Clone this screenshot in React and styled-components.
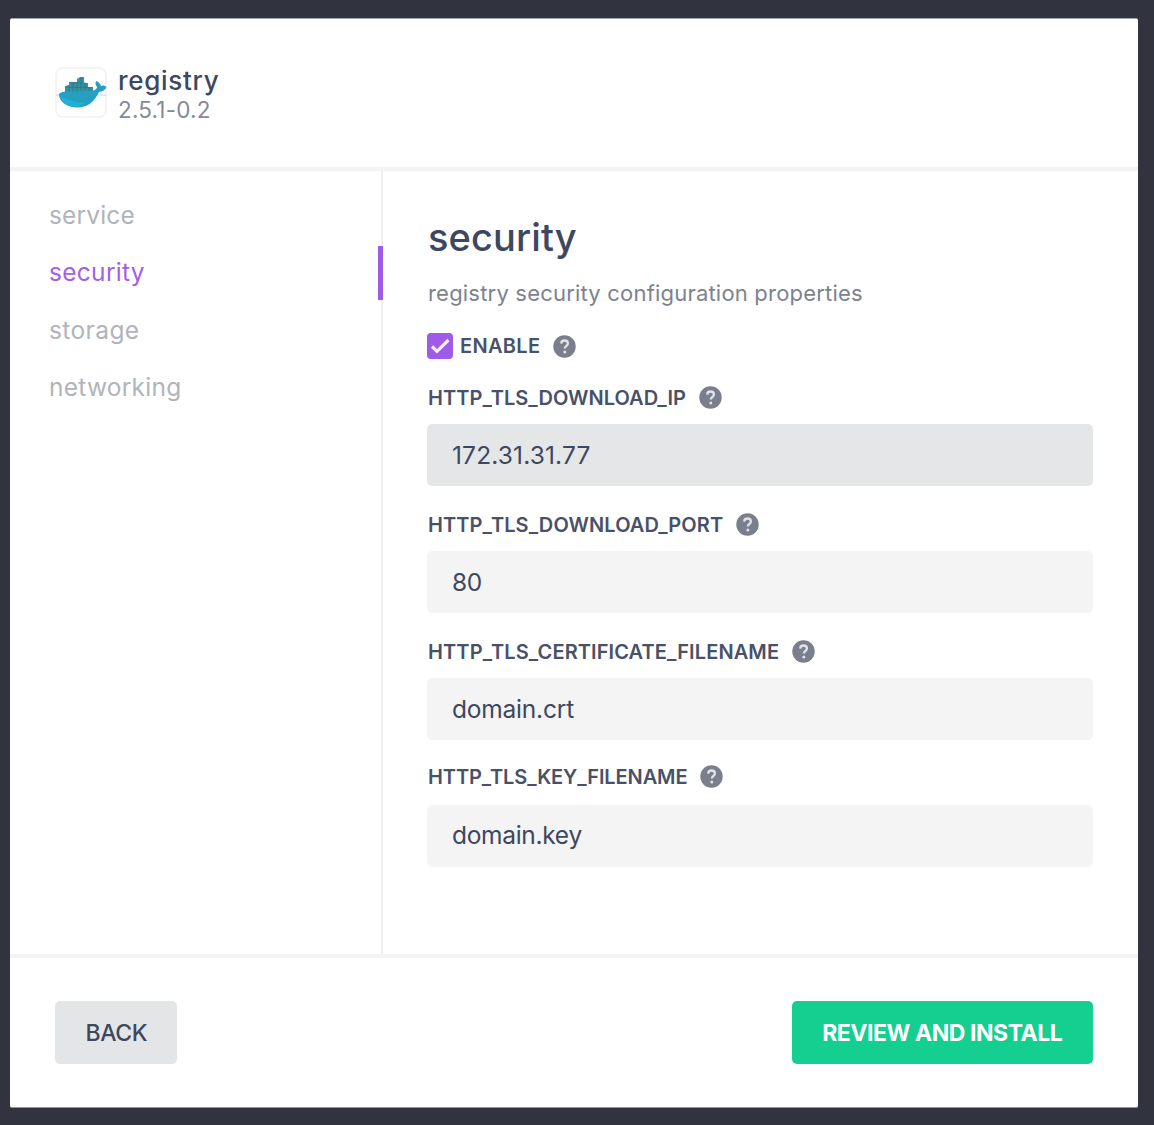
import React, { useState } from "react";
import styled, { createGlobalStyle } from "styled-components";

const ink = "#3d475f";

const GlobalStyle = createGlobalStyle`
  *, *::before, *::after { box-sizing: border-box; }
  body {
    margin: 0;
    background: #31343e;
    color: ${ink};
    font-family: Inter, "Liberation Sans", sans-serif;
  }
  button, input { font-family: inherit; }
`;

const Page = styled.main`
  height: 1125px;
  padding: 18px 16px 17px 10px;
  background: #31343e;
`;

const Dialog = styled.section`
  display: flex;
  flex-direction: column;
  height: 1090px;
  background: #fff;
  border-top: 1px solid #a5a6aa;
  border-bottom: 1px solid #8f9395;
  border-radius: 2px;
`;

const Header = styled.header`
  display: flex;
  align-items: flex-start;
  height: 152px;
  padding: 48px 44px 0;
  border-bottom: 4px solid #f3f3f3;
`;

const LogoTile = styled.div`
  width: 52px;
  height: 51px;
  margin-left: 0.5px;
  border: 2px solid #f4f4f4;
  border-radius: 8px;
  svg { display: block; }
`;

const Identity = styled.div`
  display: flex;
  flex-direction: column;
  margin-left: 11.5px;
`;

const AppName = styled.h1`
  margin: -2px 0 0;
  font-size: 26px;
  font-weight: 500;
  line-height: 32px;
  letter-spacing: 0.7px;
`;

const Version = styled.span`
  font-size: 22.5px;
  line-height: 26px;
  letter-spacing: 0.2px;
  color: #858a97;
`;

const Body = styled.div`
  display: flex;
  flex: 1;
`;

const Nav = styled.nav`
  display: flex;
  flex-direction: column;
  gap: 4px;
  width: 373px;
  padding-top: 18px;
  border-right: 2px solid #efeff0;
`;

const NavItem = styled.a`
  display: flex;
  align-items: center;
  height: 53.3px;
  margin-right: -2px;
  padding: 0 0 1px 39px;
  border-right: 5px solid ${(p) => (p.$active ? "#9e5be8" : "transparent")};
  color: ${(p) => (p.$active ? "#a35eea" : "#b0b4bc")};
  font-size: 24.5px;
  letter-spacing: ${(p) => p.$track}px;
`;

const Content = styled.div`
  flex: 1;
  padding: 41px 45px 0 44px;
`;

const Title = styled.h2`
  margin: 0 0 0 1px;
  font-size: 38px;
  font-weight: 500;
  line-height: 50px;
  letter-spacing: 0.1px;
`;

const Description = styled.p`
  margin: 17px 0 0 1px;
  font-size: 22px;
  line-height: 28px;
  letter-spacing: 0.2px;
  color: #7c8290;
`;

const EnableRow = styled.div`
  display: flex;
  align-items: center;
  height: 26px;
  margin-top: 26px;
`;

const CheckBox = styled.button`
  width: 26px;
  height: 26px;
  margin-right: 7px;
  padding: 0;
  border: 0;
  border-radius: 4px;
  background: ${(p) => (p.$checked ? "#9f5ae8" : "#e5e6e8")};
  svg { display: block; }
`;

const Label = styled.label`
  margin-right: 13px;
  font-size: 20px;
  font-weight: 600;
  line-height: 24px;
  letter-spacing: ${(p) => p.$track}px;
  color: #485168;
`;

const Fields = styled.div`
  display: flex;
  flex-direction: column;
  gap: 27px;
  padding-top: 27px;
`;

const Field = styled.div`
  &:last-child {
    margin-top: -2px;
    input { margin-top: 15.5px; }
  }
`;

const LabelRow = styled.div`
  display: flex;
  align-items: center;
  height: 24px;
  padding-left: 1px;
  svg { flex: none; margin-bottom: 1px; }
`;

const Input = styled.input`
  display: block;
  width: 100%;
  height: 62px;
  margin-top: 14px;
  padding: 0 25px 1px;
  border: 0;
  border-radius: 5px;
  outline: 0;
  background: ${(p) => (p.$shaded ? "#e5e6e8" : "#f4f4f4")};
  color: ${ink};
  font-size: 24.5px;
  letter-spacing: ${(p) => p.$track}px;
`;

const Footer = styled.footer`
  display: flex;
  justify-content: space-between;
  height: 153px;
  padding: 43px 45px 0 44.5px;
  border-top: 4px solid #f3f3f3;
`;

const Button = styled.button`
  width: ${(p) => (p.$primary ? 301.5 : 122.5)}px;
  height: 62.5px;
  padding: 2px 0 0 ${(p) => (p.$primary ? 0 : 1)}px;
  border: 0;
  border-radius: 5px;
  background: ${(p) => (p.$primary ? "#15cf90" : "#e4e5e7")};
  color: ${(p) => (p.$primary ? "#fff" : ink)};
  font-size: 23px;
  font-weight: ${(p) => (p.$primary ? 700 : 500)};
  letter-spacing: ${(p) => (p.$primary ? -0.45 : -0.4)}px;
  white-space: nowrap;
`;

function Whale() {
  return (
    <svg width="48" height="47" viewBox="0 0 48 47" overflow="visible" aria-hidden="true">
      <path d="M-1 26h50" stroke="#d3e2e6" strokeWidth="1.5" />
      <path d="M8 24v-7l4-1v-3h8v-3l3-2h4v6h4v4h5v6z" fill="#3590a1" />
      <path
        d="M2 25C5 22 9 23 13 22C21 24 27 21 33 22C37 22 40 20 40 18C38 15 38 13 39.500 12C42 13 43.500 15 44 17C46 16 48 16.500 49.500 18C48 21.500 45 22.500 42 23C38 31 33 38 21 38.500C10 38.500 2 33 2 25Z"
        fill="#279fc1"
      />
      <path d="M3 28C12 30 16 34 28 34C22 39.500 12 38.500 7 34Z" fill="#20b1d6" />
      <path d="M12 16v6M16 13v9M20 13v9M24 9v12M28 14v7M32 18v4M9 18.500h26M13 14h16" stroke="#237486" strokeWidth=".6" />
    </svg>
  );
}

function Tick() {
  return (
    <svg width="26" height="26" viewBox="0 0 26 26" aria-hidden="true">
      <path d="M5 13.500l5 4.800L21.500 7" fill="none" stroke="#f8efff" strokeWidth="3.2" />
    </svg>
  );
}

function Help() {
  return (
    <svg width="23" height="23" viewBox="0 0 23 23" aria-hidden="true">
      <circle cx="11.5" cy="11.5" r="11.2" fill="#7b7f8d" />
      <path
        d="M8.200 8.600C8.300 6.400 9.700 5.500 11.500 5.500C13.500 5.500 14.900 6.700 14.900 8.400C14.900 10.800 11.800 10.800 11.800 13.600"
        fill="none"
        stroke="#e2e3e7"
        strokeWidth="2.3"
      />
      <circle cx="11.8" cy="17" r="1.5" fill="#e2e3e7" />
    </svg>
  );
}

const sections = [
  { name: "service", track: 0.15 },
  { name: "security", track: 0.3 },
  { name: "storage", track: 0.4 },
  { name: "networking", track: 0.25 },
];

const fields = [
  { name: "HTTP_TLS_DOWNLOAD_IP", value: "172.31.31.77", shaded: true, track: 0.04, valueTrack: 0.15 },
  { name: "HTTP_TLS_DOWNLOAD_PORT", value: "80", track: 0.09, valueTrack: -0.3 },
  { name: "HTTP_TLS_CERTIFICATE_FILENAME", value: "domain.crt", track: 0.11, valueTrack: -0.2 },
  { name: "HTTP_TLS_KEY_FILENAME", value: "domain.key", track: -0.1, valueTrack: -0.3 },
];

export default function App() {
  const [enabled, setEnabled] = useState(true);
  return (
    <>
      <GlobalStyle />
      <Page>
        <Dialog>
          <Header>
            <LogoTile><Whale /></LogoTile>
            <Identity>
              <AppName>registry</AppName>
              <Version>2.5.1-0.2</Version>
            </Identity>
          </Header>
          <Body>
            <Nav>
              {sections.map((s) => (
                <NavItem key={s.name} $active={s.name === "security"} $track={s.track}>{s.name}</NavItem>
              ))}
            </Nav>
            <Content>
              <Title>security</Title>
              <Description>registry security configuration properties</Description>
              <EnableRow>
                <CheckBox $checked={enabled} onClick={() => setEnabled(!enabled)} aria-label="Enable">
                  {enabled && <Tick />}
                </CheckBox>
                <Label $track={0.32}>ENABLE</Label>
                <Help />
              </EnableRow>
              <Fields>
                {fields.map((f) => (
                  <Field key={f.name}>
                    <LabelRow>
                      <Label htmlFor={f.name} $track={f.track}>{f.name}</Label>
                      <Help />
                    </LabelRow>
                    <Input id={f.name} defaultValue={f.value} $shaded={f.shaded} $track={f.valueTrack} />
                  </Field>
                ))}
              </Fields>
            </Content>
          </Body>
          <Footer>
            <Button>BACK</Button>
            <Button $primary>REVIEW AND INSTALL</Button>
          </Footer>
        </Dialog>
      </Page>
    </>
  );
}
